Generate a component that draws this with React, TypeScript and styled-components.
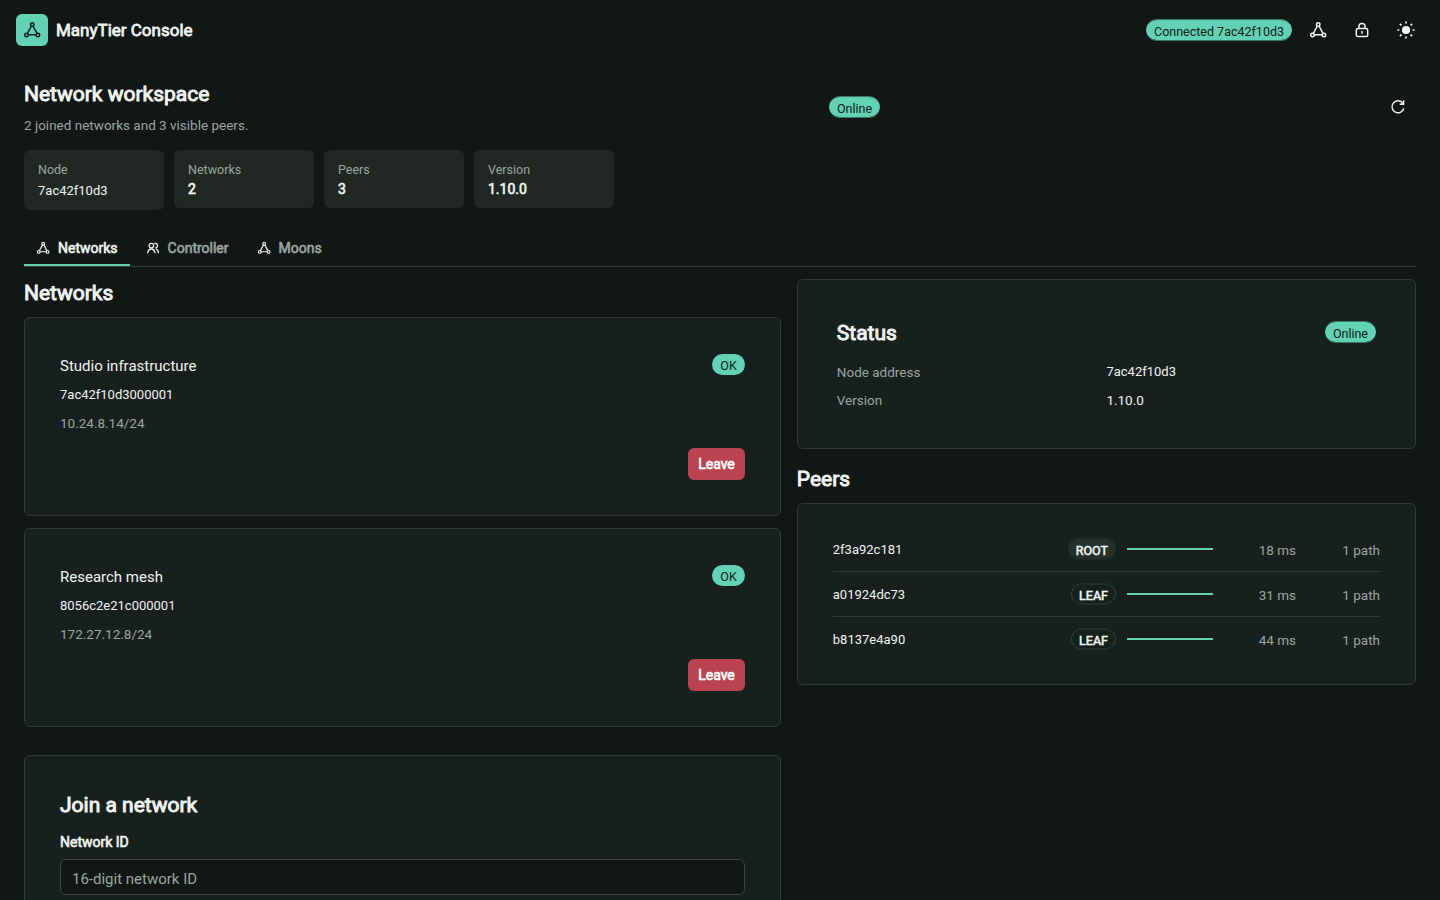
import React from "react";
import styled, { createGlobalStyle, css } from "styled-components";

const c = {
  bg: "#111714",
  card: "#18201d",
  muted: "#212824",
  line: "#2e3c37",
  text: "#f0f4f2",
  dim: "#9ba6a1",
  accent: "#63d2b4",
  ink: "#10201a",
  danger: "#bb4250",
};

const heavy = css`
  font-weight: 400;
  -webkit-text-stroke: 0.045em currentColor;
`;

const GlobalStyle = createGlobalStyle`
  *, *::before, *::after { box-sizing: border-box; }
  html, body { margin: 0; height: 100%; overflow: hidden; background: ${c.bg}; }
  body { font: 400 14px/20px Roboto, sans-serif; color: ${c.text}; }
  h1, h2, p { margin: 0; }
  button, input { font: inherit; color: inherit; }
  svg { display: block; flex: none; }
`;

const TopBar = styled.header`
  display: flex;
  align-items: center;
  justify-content: space-between;
  height: 60px;
  padding: 0 16px;
`;

const Brand = styled.div`
  display: flex;
  align-items: center;
  gap: 8px;
  font-size: 17px;
  ${heavy}
`;

const Logo = styled.span`
  display: grid;
  place-items: center;
  width: 32px;
  height: 32px;
  border-radius: 6px;
  background: ${c.accent};
  color: ${c.ink};
`;

const BarActions = styled.div`
  display: flex;
  align-items: center;
  gap: 8px;
`;

const IconButton = styled.button`
  display: grid;
  place-items: center;
  width: 36px;
  height: 36px;
  padding: 0;
  border: 0;
  border-radius: 6px;
  background: transparent;
`;

const Badge = styled.span`
  display: inline-flex;
  align-items: center;
  height: 21px;
  padding: 3px 8px 0;
  border-radius: 11px;
  font-size: 12.5px;
  line-height: 18px;
  white-space: nowrap;
  background: ${c.accent};
  color: ${c.ink};
`;

const SoftBadge = styled(Badge)`
  height: 22px;
  border: solid rgba(99, 210, 180, 0.5);
  border-width: 1px 0;
  background-clip: padding-box;
`;

const Page = styled.main`
  padding: 20px 24px 0;
`;

const Intro = styled.section`
  display: flex;
  align-items: center;
  justify-content: space-between;
  height: 54px;
`;

const IntroActions = styled.div`
  display: flex;
  align-items: center;
  justify-content: space-between;
  width: 587px;
`;

const Heading = styled.h2`
  font-size: 21px;
  line-height: 28px;
  ${heavy}
`;

const Caption = styled.p`
  font-size: 13.5px;
  line-height: 20px;
  color: ${c.dim};
`;

const IntroCaption = styled(Caption)`
  margin-top: 7px;
`;

const Stats = styled.section`
  display: flex;
  align-items: flex-start;
  gap: 10px;
  height: 60px;
  margin-top: 16px;
`;

const Stat = styled.div`
  width: 140px;
  padding: 10px 14px;
  border-radius: 6px;
  background: ${c.muted};
`;

const StatLabel = styled.div`
  font-size: 12.5px;
  line-height: 20px;
  color: ${c.dim};
`;

const StatValue = styled.div<{ $code?: boolean }>`
  line-height: 18px;
  ${heavy}
  ${(p) =>
    p.$code &&
    css`
      padding-top: 2px;
      font-size: 13px;
      -webkit-text-stroke: 0;
    `}
`;

const Tabs = styled.nav`
  display: flex;
  gap: 4px;
  height: 37px;
  margin-top: 20px;
  border-bottom: 1px solid ${c.line};
`;

const Tab = styled.button<{ $active?: boolean }>`
  display: flex;
  align-items: center;
  gap: 8px;
  height: 36px;
  padding: 2px 12px 0;
  border: 0;
  border-bottom: 2px solid ${(p) => (p.$active ? c.accent : "transparent")};
  background: none;
  color: ${(p) => (p.$active ? c.text : c.dim)};
  ${heavy}
  svg { color: ${c.text}; }
`;

const Columns = styled.div`
  display: grid;
  grid-template-columns: 1.1fr 0.9fr;
  gap: 16px;
  align-items: start;
  padding-top: 12px;
`;

const Column = styled.div`
  display: flex;
  flex-direction: column;
`;

const Card = styled.section`
  border: 1px solid ${c.line};
  border-radius: 6px;
  background: ${c.card};
`;

const NetworkList = styled.div`
  display: grid;
  gap: 12px;
  margin-top: 10px;
`;

const NetworkCard = styled(Card)`
  display: flex;
  justify-content: space-between;
  height: 199px;
  padding: 35px;
`;

const NetworkInfo = styled.div`
  display: flex;
  flex-direction: column;
  padding-top: 3px;
`;

const NetworkName = styled.div`
  font-size: 15px;
  line-height: 20px;
`;

const Code = styled.span`
  font-size: 13px;
  line-height: 20px;
`;

const NetworkId = styled(Code)`
  margin: 9px 0 8px;
`;

const NetworkSide = styled.div`
  display: flex;
  flex-direction: column;
  justify-content: space-between;
  align-items: flex-end;
  padding-top: 1px;
`;

const LeaveButton = styled.button`
  height: 32px;
  padding: 0 10px;
  border: 0;
  border-radius: 6px;
  background: ${c.danger};
  color: #fff;
  ${heavy}
`;

const JoinCard = styled(Card)`
  height: 145px;
  margin-top: 28px;
  padding: 35px;
  border-bottom: 0;
  border-radius: 6px 6px 0 0;
`;

const FieldLabel = styled.label`
  display: block;
  margin-top: 13px;
  ${heavy}
`;

const Field = styled.input`
  display: block;
  width: 100%;
  height: 36px;
  margin-top: 7px;
  padding: 3px 11px 0;
  border: 1px solid #39453f;
  border-radius: 6px;
  background: ${c.bg};
  font-size: 15px;
  &::placeholder { color: ${c.dim}; opacity: 1; }
`;

const StatusCard = styled(Card)`
  height: 170px;
  padding: 39px;
`;

const StatusHead = styled.div`
  display: flex;
  align-items: center;
  justify-content: space-between;
  height: 26px;
`;

const StatusTitle = styled(Heading)`
  padding-top: 2px;
`;

const StatusRows = styled.div`
  margin-top: 13px;
`;

const StatusRow = styled.div`
  display: grid;
  grid-template-columns: 1fr 1fr;
  height: 28px;
  align-items: center;
`;

const StatusValue = styled(Caption)`
  color: ${c.text};
`;

const PeersHeading = styled(Heading)`
  margin-top: 16px;
`;

const PeersCard = styled(Card)`
  margin-top: 10px;
  padding: 23px 35px;
`;

const PeerRow = styled.div`
  display: grid;
  grid-template-columns: 1fr auto 86px 71px 72px;
  align-items: center;
  column-gap: 12px;
  height: 45px;
  border-bottom: 1px solid ${c.line};
  &:last-child {
    height: 44px;
    border-bottom: 0;
  }
`;

const PeerId = styled(Code)`
  padding-top: 2px;
`;

const Role = styled(Badge)<{ $root?: boolean }>`
  height: 22px;
  margin-right: -1px;
  color: ${c.text};
  background-clip: padding-box;
  ${heavy}
  ${(p) =>
    p.$root
      ? css`
          border: solid rgba(36, 48, 43, 0.5);
          border-width: 1px 0;
          background-color: #24302b;
        `
      : css`
          padding: 3px 7px 0;
          border: solid ${c.line};
          border-width: 2px 1px;
          border-top-color: rgba(46, 60, 55, 0.5);
          border-bottom-color: rgba(46, 60, 55, 0.5);
          background-color: transparent;
        `}
`;

const Latency = styled.i`
  height: 2px;
  background: ${c.accent};
`;

const Metric = styled(Caption)`
  padding-top: 1px;
  text-align: right;
`;

function NetworkIcon({ size = 18 }: { size?: number }) {
  return (
    <svg width={size} height={size} viewBox="-0.2 0 18 18" fill="none" stroke="currentColor" strokeWidth="1.5">
      <circle cx="9" cy="3.4" r="1.75" />
      <circle cx="3.3" cy="14" r="1.75" />
      <circle cx="14.7" cy="14" r="1.75" />
      <path d="M8.2 5 4.2 12.4M9.8 5 13.8 12.4M5 13.8h8" />
    </svg>
  );
}

function LockIcon() {
  return (
    <svg width="18" height="18" viewBox="0 0 18 18" fill="none" stroke="currentColor" strokeWidth="1.5">
      <rect x="3.3" y="7.6" width="11.4" height="7.9" rx="1.6" />
      <path d="M5.9 7.5V5.5a3.1 3.1 0 0 1 6.2 0v2M9 10v2.8" />
    </svg>
  );
}

function SunIcon() {
  return (
    <svg width="18" height="18" viewBox="0 0 18 18" fill="none" stroke="currentColor" strokeWidth="1.7">
      <circle cx="9" cy="9" r="4.1" fill="currentColor" stroke="none" />
      <path d="M9 .4v2M9 15.6v2M.4 9h2M15.6 9h2M2.9 2.9l1.5 1.5M13.6 13.6l1.5 1.5M2.9 15.1l1.5-1.5M13.6 4.4l1.500-1.500" />
    </svg>
  );
}

function RefreshIcon() {
  return (
    <svg width="18" height="18" viewBox="0 0 18 18" fill="none" stroke="currentColor" strokeWidth="1.5">
      <path d="M13.5 4.8A6 6 0 1 0 14.8 10.5M14.6 2.3v3.900h-3.900" />
      <path d="M12.200 5.800h2.200V3.600z" fill="currentColor" stroke="none" />
    </svg>
  );
}

function PeopleIcon() {
  return (
    <svg width="14" height="14" viewBox="0 0 14 14" fill="none" stroke="currentColor" strokeWidth="1.3">
      <circle cx="5.4" cy="4.6" r="2.3" />
      <path d="M1.700 12.200c.3-2.800 1.800-4.200 3.700-4.200s3.400 1.400 3.700 4.200M8.300 2.500a2.300 2.300 0 1 1 .8 4.400M10 7.900c1.500.5 2.300 2 2.500 4.300" />
    </svg>
  );
}

const stats = [
  { label: "Node", value: "7ac42f10d3", code: true },
  { label: "Networks", value: "2" },
  { label: "Peers", value: "3" },
  { label: "Version", value: "1.10.0" },
];

const networks = [
  { name: "Studio infrastructure", id: "7ac42f10d3000001", ip: "10.24.8.14/24" },
  { name: "Research mesh", id: "8056c2e21c000001", ip: "172.27.12.8/24" },
];

const peers = [
  { id: "2f3a92c181", role: "ROOT", ms: "18 ms" },
  { id: "a01924dc73", role: "LEAF", ms: "31 ms" },
  { id: "b8137e4a90", role: "LEAF", ms: "44 ms" },
];

export default function App() {
  return (
    <>
      <GlobalStyle />
      <TopBar>
        <Brand>
          <Logo><NetworkIcon /></Logo>
          ManyTier Console
        </Brand>
        <BarActions>
          <SoftBadge>Connected 7ac42f10d3</SoftBadge>
          <IconButton aria-label="Networks"><NetworkIcon /></IconButton>
          <IconButton aria-label="Lock"><LockIcon /></IconButton>
          <IconButton aria-label="Theme"><SunIcon /></IconButton>
        </BarActions>
      </TopBar>
      <Page>
        <Intro>
          <div>
            <Heading as="h1">Network workspace</Heading>
            <IntroCaption>2 joined networks and 3 visible peers.</IntroCaption>
          </div>
          <IntroActions>
            <SoftBadge>Online</SoftBadge>
            <IconButton aria-label="Refresh"><RefreshIcon /></IconButton>
          </IntroActions>
        </Intro>
        <Stats>
          {stats.map((s) => (
            <Stat key={s.label}>
              <StatLabel>{s.label}</StatLabel>
              <StatValue $code={s.code}>{s.value}</StatValue>
            </Stat>
          ))}
        </Stats>
        <Tabs>
          <Tab $active><NetworkIcon size={14} />Networks</Tab>
          <Tab><PeopleIcon />Controller</Tab>
          <Tab><NetworkIcon size={14} />Moons</Tab>
        </Tabs>
        <Columns>
          <Column>
            <Heading>Networks</Heading>
            <NetworkList>
              {networks.map((n) => (
                <NetworkCard key={n.id}>
                  <NetworkInfo>
                    <NetworkName>{n.name}</NetworkName>
                    <NetworkId>{n.id}</NetworkId>
                    <Caption>{n.ip}</Caption>
                  </NetworkInfo>
                  <NetworkSide>
                    <Badge>OK</Badge>
                    <LeaveButton>Leave</LeaveButton>
                  </NetworkSide>
                </NetworkCard>
              ))}
            </NetworkList>
            <JoinCard>
              <Heading>Join a network</Heading>
              <FieldLabel htmlFor="nwid">Network ID</FieldLabel>
              <Field id="nwid" placeholder="16-digit network ID" />
            </JoinCard>
          </Column>
          <Column>
            <StatusCard>
              <StatusHead>
                <StatusTitle>Status</StatusTitle>
                <SoftBadge>Online</SoftBadge>
              </StatusHead>
              <StatusRows>
                <StatusRow><Caption>Node address</Caption><Code>7ac42f10d3</Code></StatusRow>
                <StatusRow><Caption>Version</Caption><StatusValue>1.10.0</StatusValue></StatusRow>
              </StatusRows>
            </StatusCard>
            <PeersHeading>Peers</PeersHeading>
            <PeersCard>
              {peers.map((p) => (
                <PeerRow key={p.id}>
                  <PeerId>{p.id}</PeerId>
                  <Role $root={p.role === "ROOT"}>{p.role}</Role>
                  <Latency />
                  <Metric>{p.ms}</Metric>
                  <Metric>1 path</Metric>
                </PeerRow>
              ))}
            </PeersCard>
          </Column>
        </Columns>
      </Page>
    </>
  );
}
